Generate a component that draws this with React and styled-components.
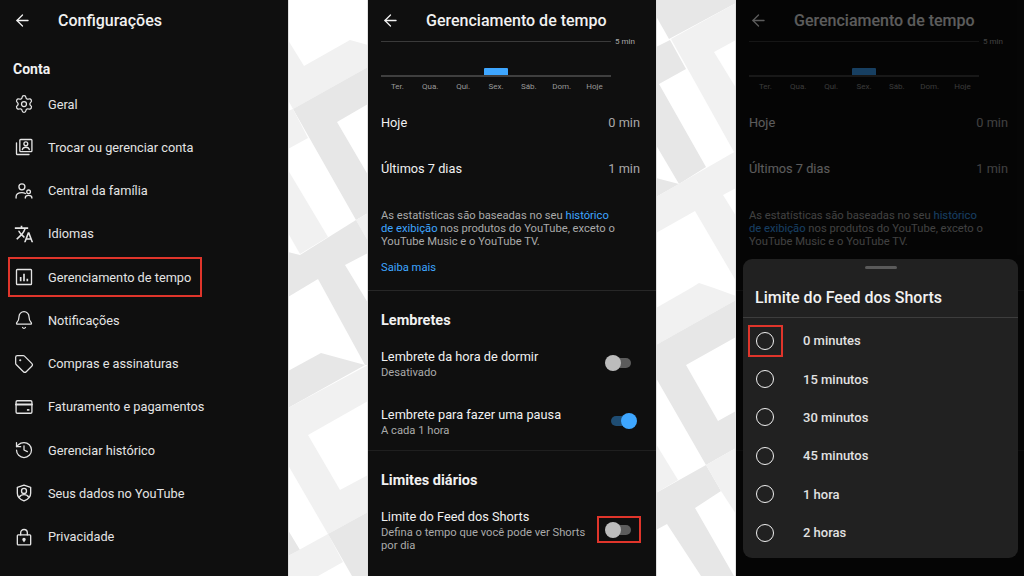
import React from 'react'
import styled, { createGlobalStyle } from 'styled-components'
import { ArrowLeft, Settings, Bell, Tag, History } from 'lucide-react'
import { MdTranslate } from 'react-icons/md'

const GlobalStyle = createGlobalStyle`
  html, body { margin: 0; padding: 0; background: #fff; }
  body { font-family: Roboto, "Liberation Sans", sans-serif; }
  * { box-sizing: border-box; }
`

const Page = styled.div`
  display: grid;
  grid-template-columns: 288px 80px 288px 80px 288px;
  width: 1024px;
  height: 576px;
  overflow: hidden;
`

const Phone = styled.section`
  position: relative;
  height: 576px;
  background: #0f0f0f;
  color: #f1f1f1;
  overflow: hidden;
`

const Gutter = styled.svg`
  display: block;
  width: 80px;
  height: 576px;
  background: #fff;
`

const Header = styled.header`
  display: flex;
  align-items: center;
  height: 40px;
  margin-bottom: -2px;
  padding-left: 13px;
  svg { flex: none; }
  h1 {
    margin: 0 0 0 26px;
    font-size: 16px;
    font-weight: 500;
    color: #f1f1f1;
  }
`

const SectionTitle = styled.h2`
  margin: ${(p) => p.$top}px 0 ${(p) => 25 - p.$top}px;
  padding: 0 13px;
  font-size: ${(p) => p.$size || 14.5}px;
  line-height: 18px;
  font-weight: 700;
  color: #f1f1f1;
`

const MenuList = styled.div`
  display: flex;
  flex-direction: column;
  padding-top: 1.5px;
`

const MenuRow = styled.div`
  position: relative;
  display: flex;
  align-items: center;
  height: 43.25px;
  padding-left: 14px;
  gap: 14px;
  font-size: 12.75px;
  color: #e4e4e4;
`

const MenuMark = styled.span`
  position: absolute;
  left: 8px;
  top: 1.5px;
  width: 194px;
  height: 40px;
  border: 2px solid #e0352b;
`

const Chart = styled.div`
  height: 60px;
  margin-top: 1px;
  padding: 0 0 0 13px;
  overflow: hidden;
`

const ChartTop = styled.div`
  display: flex;
  align-items: center;
  gap: 4px;
  height: 6px;
  margin-top: -1px;
  span {
    margin-top: 1px;
    font-size: 8px;
    line-height: 8px;
    color: #aaa;
  }
  i {
    display: block;
    width: 230px;
    height: 1px;
    background: #3a3a3a;
  }
`

const Plot = styled.div`
  display: grid;
  grid-template-columns: repeat(7, 1fr);
  align-items: end;
  justify-items: center;
  width: 230px;
  height: 33px;
  border-bottom: 2px solid #3f3f3f;
`

const Bar = styled.div`
  width: 24px;
  height: 7px;
  border-radius: 1px 1px 0 0;
  background: #3ea6ff;
`

const Days = styled.div`
  display: grid;
  grid-template-columns: repeat(7, 1fr);
  width: 230px;
  margin-top: 5px;
  font-size: 8px;
  line-height: 10px;
  text-align: center;
  color: #999;
`

const StatRow = styled.div`
  display: flex;
  align-items: center;
  justify-content: space-between;
  height: 46px;
  padding: 0 16px 0 13px;
  font-size: 12.75px;
  color: #f1f1f1;
  span { color: #aaa; }
`

const Note = styled.div`
  padding: 17.5px 0 16.5px 13px;
  border-bottom: 1px solid #272727;
  font-size: 11.2px;
  line-height: 13px;
  color: #aaa;
  a { color: #3ea6ff; text-decoration: none; }
  p { width: 241px; margin: 0 0 13px; }
  p:last-child { margin: 0; }
`

const Group = styled.div`
  border-bottom: ${(p) => (p.$line ? '1px solid #1f1f1f' : '0')};
`

const SettingRow = styled.div`
  display: flex;
  align-items: center;
  justify-content: space-between;
  padding: 14px 16px 14px 13px;
  gap: 14px;
`

const SettingText = styled.div`
  flex: 1;
  margin: 1px 0 -1px;
  strong {
    display: block;
    font-size: 12.75px;
    line-height: 16px;
    font-weight: 400;
    color: #f1f1f1;
  }
  small {
    display: block;
    margin-top: 1px;
    font-size: 11.2px;
    line-height: 13px;
    color: #aaa;
  }
`

const Toggle = styled.div`
  position: relative;
  flex: none;
  width: 32px;
  height: 16px;
  margin-right: 3px;
  &::before {
    content: '';
    position: absolute;
    left: 6px;
    right: 6px;
    top: 3px;
    height: 10px;
    border-radius: 5px;
    background: ${(p) => (p.$on ? '#1f4d73' : '#5c5c5c')};
  }
  &::after {
    content: '';
    position: absolute;
    left: ${(p) => (p.$on ? '16px' : '0')};
    top: 0;
    width: 16px;
    height: 16px;
    border-radius: 50%;
    background: ${(p) => (p.$on ? '#3ea6ff' : '#bcbcbc')};
  }
`

const ToggleMark = styled.span`
  position: absolute;
  left: -8px;
  right: -4px;
  top: -6px;
  bottom: -5px;
  border: 2px solid #e0352b;
`

const Dim = styled.div`
  position: absolute;
  inset: 0;
  background: rgba(0, 0, 0, 0.62);
`

const Sheet = styled.div`
  position: absolute;
  left: 7px;
  right: 6px;
  top: 259px;
  height: 299px;
  border-radius: 9px;
  background: #212121;
`

const Handle = styled.div`
  width: 32px;
  height: 3px;
  margin: 7px auto 0;
  border-radius: 2px;
  background: #5a5a5a;
`

const SheetTitle = styled.h3`
  margin: 0;
  height: 49px;
  padding: 0 12px;
  border-bottom: 1px solid #3d3d3d;
  font-size: 16px;
  line-height: 57px;
  font-weight: 500;
  color: #f1f1f1;
`

const Options = styled.div`
  padding-top: 3.5px;
`

const Option = styled.div`
  display: flex;
  align-items: center;
  height: 38.4px;
  padding-left: 13px;
  gap: 29px;
  font-size: 13px;
  font-weight: 500;
  color: #e2e2e2;
`

const Radio = styled.span`
  position: relative;
  flex: none;
  width: 18px;
  height: 18px;
  border: 1.5px solid #f1f1f1;
  border-radius: 50%;
`

const RadioMark = styled.span`
  position: absolute;
  left: -9.5px;
  right: -9.5px;
  top: -7.5px;
  bottom: -8.5px;
  border: 2px solid #e0352b;
`

// hand drawn where the icon packs have no close match
const Line = ({ children }) => (
  <svg width="20" height="20" viewBox="0 0 24 24" fill="none" stroke="currentColor" strokeWidth="1.6" strokeLinecap="round" strokeLinejoin="round" style={{ flex: 'none' }}>
    {children}
  </svg>
)

const SwitchIcon = () => (
  <Line>
    <rect x="7" y="3" width="14.5" height="14.5" rx="1" />
    <circle cx="14.2" cy="8.2" r="2.3" />
    <path d="M10 15.2c.4-2 2.2-2.9 4.2-2.9s3.8.9 4.2 2.9" />
    <path d="M3 7v13a1 1 0 0 0 1 1h14" />
  </Line>
)

const FamilyIcon = () => (
  <Line>
    <circle cx="9.5" cy="7" r="3.6" />
    <path d="M2.5 20.5v-1.5c0-3 3-5 7-5 1.6 0 3 .3 4.2 1" />
    <circle cx="17.5" cy="13" r="2.2" />
    <path d="M13.5 20.5c0-2 1.800-3.200 4-3.200s4 1.200 4 3.200" />
  </Line>
)

const ChartIcon = () => (
  <Line>
    <rect x="3" y="3" width="18" height="18" rx="1" />
    <path d="M8 17v-5M12 17V8M16 17v-3" strokeWidth="2" strokeLinecap="butt" />
  </Line>
)

const CardIcon = () => (
  <Line>
    <rect x="2.500" y="4.500" width="19" height="15" rx="1.500" />
    <path d="M2.500 9h19" strokeWidth="2.500" />
    <path d="M15.500 15.500h3" strokeWidth="2" strokeLinecap="butt" />
  </Line>
)

const ShieldIcon = () => (
  <Line>
    <path d="M12 2.500l8 2.700v7c0 4.300-3.300 7.500-8 9.300-4.700-1.800-8-5-8-9.300v-7z" />
    <circle cx="12" cy="9.500" r="3" />
    <path d="M6.500 17c1-2 3.200-3 5.500-3s4.500 1 5.500 3" />
  </Line>
)

const LockIcon = () => (
  <Line>
    <rect x="4" y="9.500" width="16" height="12" rx="1" />
    <path d="M8 9.500V7a4 4 0 0 1 8 0v2.500" />
    <circle cx="12" cy="15" r="1.300" fill="currentColor" />
    <path d="M12 15.500v2" />
  </Line>
)

const lucide = { size: 20, strokeWidth: 1.5 }

const menu = [
  { label: 'Geral', icon: <Settings {...lucide} /> },
  { label: 'Trocar ou gerenciar conta', icon: <SwitchIcon /> },
  { label: 'Central da família', icon: <FamilyIcon /> },
  { label: 'Idiomas', icon: <MdTranslate size={20} /> },
  { label: 'Gerenciamento de tempo', icon: <ChartIcon />, marked: true },
  { label: 'Notificações', icon: <Bell {...lucide} /> },
  { label: 'Compras e assinaturas', icon: <Tag {...lucide} /> },
  { label: 'Faturamento e pagamentos', icon: <CardIcon /> },
  { label: 'Gerenciar histórico', icon: <History {...lucide} /> },
  { label: 'Seus dados no YouTube', icon: <ShieldIcon /> },
  { label: 'Privacidade', icon: <LockIcon /> },
]

const days = ['Ter.', 'Qua.', 'Qui.', 'Sex.', 'Sáb.', 'Dom.', 'Hoje']
const limits = ['0 minutes', '15 minutos', '30 minutos', '45 minutos', '1 hora', '2 horas']

const LIGHT = '#f1f1f1'
const DARK = '#e7e7e7'

const leftShapes = [
  [LIGHT, '0,40 16,66 62,40 80,45 80,67 5,109 0,100'],
  [DARK, '80,67 5,109 68,220 80,213 80,175 49,122 80,104'],
  [LIGHT, '0,111 5,109 20,138 0,149'],
  [LIGHT, '0,170 40,237 12,254 0,233'],
  [LIGHT, '68,220 80,213 80,241'],
  [DARK, '0,252 12,255 68,220 80,241 80,253 57,265 80,303 80,365 77,365 30,279 0,297'],
  [DARK, '0,371 33,353 77,365 0,408'],
  [LIGHT, '0,408 80,365 80,401 20,435 52,490 80,475 80,512 40,534 0,465'],
  [DARK, '0,530 12,550 0,556'],
  [LIGHT, '0,556 40,534 55,562 30,576 0,576'],
  [DARK, '40,534 80,512 80,576 64,576'],
]

const rightShapes = [
  [DARK, '0,0 80,0 80,3 13,39 0,16'],
  [DARK, '0,47 14,40 30,69 3,84 50,167 23,184 0,145'],
  [DARK, '0,178 23,184 0,197'],
  [LIGHT, '80,3 15,39 78,152 80,151 80,88 58,52 80,40'],
  [LIGHT, '80,151 0,197 0,233 39,211 80,281 80,216 67,195 80,188'],
  [LIGHT, '0,308 35,288 43,283 58,288 80,296 80,300 0,345'],
  [DARK, '0,345 80,300 80,337 30,365 62,421 80,411 80,448 50,465 0,378'],
  [DARK, '50,465 65,491 39,508 78,576 45,576 11,524 0,530 0,493'],
  [LIGHT, '50,465 80,448 80,514 65,491'],
  [LIGHT, '0,444 22,480 0,493'],
]

const Backdrop = ({ shapes }) => (
  <Gutter viewBox="0 0 80 576">
    {shapes.map(([fill, points]) => (
      <polygon key={points} fill={fill} points={points} />
    ))}
    <path d="M.5 0v576M79.500 0v576" stroke="#e2e2e2" />
  </Gutter>
)

const SettingsScreen = () => (
  <Phone>
    <Header>
      <ArrowLeft size={19} strokeWidth={1.6} />
      <h1>Configurações</h1>
    </Header>
    <SectionTitle $top={22} $size={14}>Conta</SectionTitle>
    <MenuList>
      {menu.map((item) => (
        <MenuRow key={item.label}>
          {item.icon}
          {item.label}
          {item.marked && <MenuMark />}
        </MenuRow>
      ))}
    </MenuList>
  </Phone>
)

const TimeScreen = ({ children }) => (
  <Phone>
    <Header>
      <ArrowLeft size={19} strokeWidth={1.6} />
      <h1>Gerenciamento de tempo</h1>
    </Header>
    <Chart>
      <ChartTop>
        <i />
        <span>5 min</span>
      </ChartTop>
      <Plot>
        {days.map((day) => (
          <div key={day}>{day === 'Sex.' && <Bar />}</div>
        ))}
      </Plot>
      <Days>
        {days.map((day) => (
          <span key={day}>{day}</span>
        ))}
      </Days>
    </Chart>
    <StatRow>
      Hoje <span>0 min</span>
    </StatRow>
    <StatRow>
      Últimos 7 dias <span>1 min</span>
    </StatRow>
    <Note>
      <p>
        As estatísticas são baseadas no seu <a href="#h">histórico de exibição</a> nos produtos do YouTube, exceto o
        YouTube Music e o YouTube TV.
      </p>
      <p>
        <a href="#s">Saiba mais</a>
      </p>
    </Note>
    <Group $line>
      <SectionTitle $top={21}>Lembretes</SectionTitle>
      <SettingRow>
        <SettingText>
          <strong>Lembrete da hora de dormir</strong>
          <small>Desativado</small>
        </SettingText>
        <Toggle />
      </SettingRow>
      <SettingRow>
        <SettingText>
          <strong>Lembrete para fazer uma pausa</strong>
          <small>A cada 1 hora</small>
        </SettingText>
        <Toggle $on />
      </SettingRow>
    </Group>
    <Group>
      <SectionTitle $top={21}>Limites diários</SectionTitle>
      <SettingRow>
        <SettingText>
          <strong>Limite do Feed dos Shorts</strong>
          <small>Defina o tempo que você pode ver Shorts por dia</small>
        </SettingText>
        <Toggle>
          <ToggleMark />
        </Toggle>
      </SettingRow>
    </Group>
    {children}
  </Phone>
)

const App = () => (
  <Page>
    <GlobalStyle />
    <SettingsScreen />
    <Backdrop shapes={leftShapes} />
    <TimeScreen />
    <Backdrop shapes={rightShapes} />
    <TimeScreen>
      <Dim />
      <Sheet>
        <Handle />
        <SheetTitle>Limite do Feed dos Shorts</SheetTitle>
        <Options>
          {limits.map((limit, i) => (
            <Option key={limit}>
              <Radio>{i === 0 && <RadioMark />}</Radio>
              {limit}
            </Option>
          ))}
        </Options>
      </Sheet>
    </TimeScreen>
  </Page>
)

export default App
